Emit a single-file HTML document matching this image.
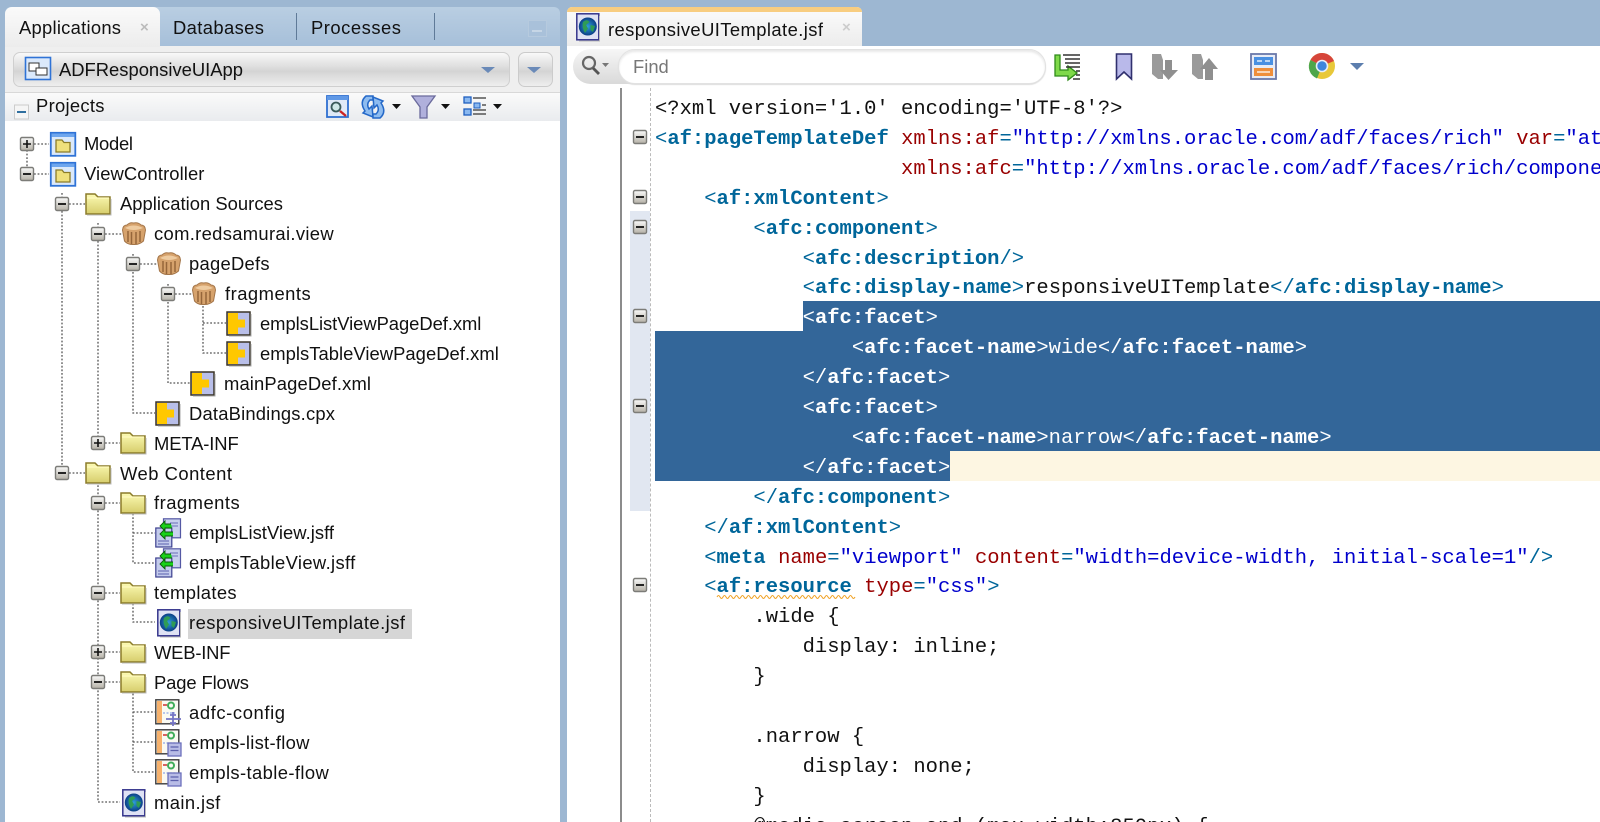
<!DOCTYPE html>
<html><head><meta charset="utf-8"><title>responsiveUITemplate.jsf</title>
<style>
html,body{margin:0;padding:0;width:1600px;height:822px;overflow:hidden;background:#9db7d2}
#root{position:absolute;left:0;top:0;width:1600px;height:822px;overflow:hidden;filter:blur(.35px)}
.a{position:absolute}
#code{position:absolute;left:0;top:4px}
#code div{position:absolute;left:655px;height:30px;line-height:30px;white-space:pre;font:20.5px/30px "Liberation Mono",monospace;color:#111}
#code b{color:#00669a;font-weight:bold}
#code i{font-style:normal;color:#00669a}
#code u{text-decoration:none;color:#990000}
#code em{font-style:normal;color:#0000cc}
#code .s,#code .s b,#code .s i{color:#fff}
.tt{font:18.4px "Liberation Sans",sans-serif;fill:#111}
</style></head><body><div id="root">
<!-- left panel -->
<div class="a" style="left:5px;top:7px;width:555px;height:39px;background:linear-gradient(#b9cee2,#a6bfd9);border-radius:6px 6px 0 0"></div>
<div class="a" style="left:5px;top:46px;width:555px;height:46px;background:#efefef"></div>
<div class="a" style="left:5px;top:7px;width:155px;height:40px;background:linear-gradient(#fafafa,#ececec);border-radius:7px 7px 0 0"></div>
<div class="a" style="left:296px;top:13px;width:1px;height:27px;background:#5f7a98"></div>
<div class="a" style="left:434px;top:13px;width:1px;height:27px;background:#5f7a98"></div>
<div class="a" style="left:528px;top:20px;width:17px;height:15px;border:1px solid #b6cade;background:#a9c1da"></div>
<div class="a" style="left:532px;top:30px;width:10px;height:2px;background:#c6d6e6"></div>
<div class="a" style="left:13px;top:52px;width:495px;height:33px;border:1px solid #cfcfcf;border-radius:7px;background:linear-gradient(#f9f9f9,#dedede 42%,#d4d4d4 55%,#eeeeee)"></div>
<div class="a" style="left:518px;top:52px;width:33px;height:33px;border:1px solid #cbcbcb;border-radius:7px;background:linear-gradient(#f9f9f9,#dedede 42%,#d4d4d4 55%,#eeeeee)"></div>
<div class="a" style="left:5px;top:92px;width:555px;height:28px;background:linear-gradient(#fafafa,#e9ebee);border-top:1px solid #d8d8d8;border-bottom:1px solid #c4d0de"></div>
<div class="a" style="left:5px;top:121px;width:555px;height:701px;background:#fff"></div>
<div class="a" style="left:188px;top:609px;width:224px;height:30px;background:#d6d6d6"></div>
<!-- editor -->
<div class="a" style="left:567px;top:46px;width:1033px;height:776px;background:#fff"></div>
<div class="a" style="left:567px;top:7px;width:295px;height:39px;background:linear-gradient(#fbfbfb,#ececec);border-radius:5px 5px 0 0;overflow:hidden"><div style="height:5px;background:#f8cd80"></div></div>
<div class="a" style="left:573px;top:49px;width:60px;height:35px;border-radius:18px 0 0 18px;background:linear-gradient(#f6f6f6,#d9d9d9)"></div>
<div class="a" style="left:618px;top:49px;width:426px;height:33px;border:1px solid #e2e2e2;border-radius:17px;background:#fff;box-shadow:inset 0 2px 2px #e8e8e8,0 1px 1px #ddd"></div>
<div class="a" style="left:620px;top:88px;width:1.5px;height:734px;background:#8c8c8c"></div>
<div class="a" style="left:630px;top:211px;width:20px;height:300px;background:#e1e7f1"></div>
<div class="a" style="left:650px;top:88px;width:0;height:734px;border-left:1px dashed #bbb"></div>
<!-- selection -->
<div class="a" style="left:803px;top:301px;width:797px;height:30px;background:#336699"></div>
<div class="a" style="left:655px;top:331px;width:945px;height:120px;background:#336699"></div>
<div class="a" style="left:655px;top:451px;width:295px;height:30px;background:#336699"></div>
<div class="a" style="left:950px;top:451px;width:650px;height:30px;background:#fdf6e2"></div>

<svg class="a" style="left:0;top:0" width="1600" height="822" viewBox="0 0 1600 822">
<defs>
<linearGradient id="fg" x1="0" y1="0" x2="0" y2="1"><stop offset="0" stop-color="#fdfbb4"/><stop offset="1" stop-color="#d6cd6c"/></linearGradient>
<linearGradient id="eg" x1="0" y1="0" x2="0" y2="1"><stop offset="0" stop-color="#fafafa"/><stop offset="1" stop-color="#b5b1a6"/></linearGradient>
<radialGradient id="gb"><stop offset="0" stop-color="#2f9fd8"/><stop offset="1" stop-color="#0b3f86"/></radialGradient>
<symbol id="plus" overflow="visible"><rect x="-6.5" y="-6.5" width="13" height="13" rx="1.5" fill="url(#eg)" stroke="#7c7c78" stroke-width="1.4"/><path d="M-4 0H4M0-4V4" stroke="#111" stroke-width="1.6"/></symbol>
<symbol id="minus" overflow="visible"><rect x="-6.5" y="-6.5" width="13" height="13" rx="1.5" fill="url(#eg)" stroke="#7c7c78" stroke-width="1.4"/><path d="M-4 0H4" stroke="#111" stroke-width="1.8"/></symbol>
<symbol id="folder" overflow="visible"><path d="M1 2H10L13 5H25V22H1Z" fill="url(#fg)" stroke="#8b7c2a" stroke-width="1.5"/><path d="M2 6H24" stroke="#fffbc0" stroke-width="1.2"/><path d="M2 23H26V7" fill="none" stroke="#bbb" stroke-width="1"/></symbol>
<symbol id="proj" overflow="visible"><rect x=".8" y=".8" width="24.5" height="23" fill="#dbe9fb" stroke="#2f73d6" stroke-width="1.8"/><rect x="1.5" y="1.5" width="23" height="3.5" fill="#6ea6ee"/><path d="M6 8H12L14 10.500H20V20H6Z" fill="#efe07c" stroke="#8b7c2a" stroke-width="1.3"/></symbol>
<symbol id="pkg" overflow="visible"><path d="M.5 8Q1 3 5 3Q8 0 11.500 1Q16 0 19 3Q23 3 23.500 8L21.500 19Q17 23 11.500 22.500Q6 23 2.500 19Z" fill="#d6a26c" stroke="#a4764a" stroke-width="1"/><path d="M3 6Q11.500 1 21 6Q11.500 10 3 6Z" fill="#eecba0"/><path d="M6 9V20M9.500 10V22M14 10V22M18 9V20" stroke="#96663a" stroke-width="1.500"/></symbol>
<symbol id="xml" overflow="visible"><rect x="1" y="1" width="23" height="23" fill="#b9bfe9" stroke="#3a3426" stroke-width="1.500"/><path d="M2 2H12V8.500H19V16.500H12V23H2Z" fill="#ffc800"/><path d="M25 3V25H3" fill="none" stroke="#aaa"/></symbol>
<symbol id="globe" overflow="visible"><rect x=".8" y=".8" width="22" height="26" fill="#dfe2f4" stroke="#34348c" stroke-width="1.500"/><circle cx="11.800" cy="13.500" r="9" fill="url(#gb)"/><path d="M7 9Q11 5.500 13.500 9L10 12L12 15.500L9 20Q5.500 14 7 9ZM14.500 12L19 13L17 19L14.500 17Z" fill="#2f9c55"/><path d="M23.500 3V28H3" fill="none" stroke="#bbb"/></symbol>
<symbol id="jsff" overflow="visible"><rect x="8.500" y=".8" width="17" height="19" fill="#c9d0ee" stroke="#5458a4" stroke-width="1.200"/><path d="M15 5H23M15 8H23" stroke="#6a70b8"/><rect x=".8" y="10" width="16" height="19" fill="#c4cbec" stroke="#3d418f" stroke-width="1.200"/><path d="M3 23H14M3 26H14" stroke="#5a60ae"/><path d="M16 6H10V3L5 8L10 13V10H17M18 14H10V11L5 16L10 21V18H18" fill="#19d219" stroke="#0a5a0a" stroke-width=".9"/></symbol>
<symbol id="flow" overflow="visible"><rect x=".8" y=".8" width="23" height="24" fill="#fafaf2" stroke="#3c3c3c" stroke-width="1.400"/><rect x="2" y="2" width="5" height="22" fill="#f6b26e"/><circle cx="16" cy="6.500" r="3" fill="none" stroke="#3fae5a" stroke-width="2"/><path d="M8 6H12" stroke="#c33" stroke-width="1.500"/><path d="M8 14H20" stroke="#8fa8e8" stroke-dasharray="2 1.500" stroke-width="1.300"/></symbol>
<symbol id="cross" overflow="visible"><path d="M18 13V27M11 20H26M15 16H21M15 24H21" stroke="#7474c4" stroke-width="1.800" fill="none"/></symbol>
<symbol id="page" overflow="visible"><rect x="13" y="14" width="13" height="13" fill="#b8bce6" stroke="#6c70bc" stroke-width="1.300"/><path d="M15.500 18H23.500M15.500 21.500H23.500" stroke="#5c60ac" stroke-width="1.300"/></symbol>
</defs>

<!-- tab texts -->
<text class="tt" x="19" y="34" textLength="102">Applications</text>
<text x="140" y="32" style="font:15px 'Liberation Sans',sans-serif;fill:#bbb;font-weight:bold">×</text>
<text class="tt" x="173" y="34" textLength="91">Databases</text>
<text class="tt" x="311" y="34" textLength="90">Processes</text>
<text class="tt" x="59" y="76" textLength="184">ADFResponsiveUIApp</text>
<text class="tt" x="36" y="112" textLength="68.500">Projects</text>
<text class="tt" x="608" y="36" textLength="215">responsiveUITemplate.jsf</text>
<text x="842" y="32" style="font:15px 'Liberation Sans',sans-serif;fill:#ccc;font-weight:bold">×</text>
<text x="633" y="73" style="font:18.400px 'Liberation Sans',sans-serif;fill:#777">Find</text>

<!-- app dropdown icon + arrows -->
<rect x="25.500" y="57.500" width="25" height="22" fill="#dbe9fb" stroke="#2f73d6" stroke-width="1.600"/>
<rect x="29" y="63" width="10" height="8" fill="#fff" stroke="#333"/><rect x="36" y="68" width="11" height="7" fill="#fff" stroke="#333"/>
<path d="M481 67H495L488 73Z" fill="#6a8ab8"/><path d="M527 67H541L534 73Z" fill="#6a8ab8"/>
<rect x="14.500" y="105" width="14" height="14" fill="#f5f5f5" stroke="#ccc"/><path d="M17 112H26" stroke="#2f6f9f" stroke-width="2"/>

<!-- projects toolbar -->
<rect x="327" y="96" width="21" height="21" fill="#dfe9f7" stroke="#2f6fd0" stroke-width="1.800"/><rect x="327" y="96" width="21" height="4" fill="#5f98e6"/>
<circle cx="336" cy="107" r="4.500" fill="#cfe8e8" stroke="#3a5a5a" stroke-width="1.800"/><path d="M340 111L346 116" stroke="#c22" stroke-width="2.400"/>
<path d="M366 96H373V100H370Q366 104 369 109L372 106L373 117L363 113L365 111Q359 102 366 96Z" fill="#8ebcf0" stroke="#2468c8" stroke-width="1.500"/>
<path d="M380 118H373V114H376Q380 110 377 105L374 108L373 97L383 101L381 103Q387 112 380 118Z" fill="#8ebcf0" stroke="#2468c8" stroke-width="1.500"/>
<path d="M392 104H401L396.500 109Z" fill="#111"/>
<path d="M412 96H435L427 107V118H420V107Z" fill="#b0b0dc" stroke="#6a6a9c" stroke-width="1.300"/>
<path d="M441 104H450L445.500 109Z" fill="#111"/>
<rect x="464" y="97" width="7" height="6" fill="#8ab8f0" stroke="#1f5fc0" stroke-width="1.300"/><rect x="464" y="109" width="7" height="6" fill="#8ab8f0" stroke="#1f5fc0" stroke-width="1.300"/><rect x="474" y="103" width="6" height="5" fill="#8ab8f0" stroke="#1f5fc0"/>
<path d="M473 98H486M482 105H486M473 110H486M473 114H486" stroke="#555" stroke-width="1.400"/>
<path d="M493 104H502L497.500 109Z" fill="#111"/>

<!-- connectors -->
<path d="M27 150V168M62 193V467M98 223V437M98 478V802H120M133 254V413H155M168 284V383H190M203 306V353H226M203 323H226M133 510V563H155M133 533H155M133 600V622H155M133 690V772H155M133 712H155M133 742H155
M34 144H49M34 174H49M69 204H85M105 234H122M140 264H157M175 294H192M69 473H85M105 443H120M105 503H120M105 593H120M105 652H120M105 682H120" fill="none" stroke="#555" stroke-width="1.300" stroke-dasharray="1.800 1.800"/>

<!-- expanders -->
<use href="#plus" x="27" y="144"/><use href="#minus" x="27" y="174"/><use href="#minus" x="62" y="204"/>
<use href="#minus" x="98" y="234"/><use href="#minus" x="133" y="264"/><use href="#minus" x="168" y="294"/>
<use href="#plus" x="98" y="443"/><use href="#minus" x="62" y="473"/><use href="#minus" x="98" y="503"/>
<use href="#minus" x="98" y="593"/><use href="#plus" x="98" y="652"/><use href="#minus" x="98" y="682"/>

<!-- tree icons -->
<use href="#proj" x="50" y="132"/><use href="#proj" x="50" y="162"/>
<use href="#folder" x="85" y="192"/><use href="#pkg" x="122" y="222"/><use href="#pkg" x="157" y="252"/><use href="#pkg" x="192" y="282"/>
<use href="#xml" x="226" y="311"/><use href="#xml" x="226" y="341"/><use href="#xml" x="190" y="371"/><use href="#xml" x="155" y="401"/>
<use href="#folder" x="120" y="431"/><use href="#folder" x="85" y="461"/><use href="#folder" x="120" y="491"/>
<use href="#jsff" x="155" y="518"/><use href="#jsff" x="155" y="548"/>
<use href="#folder" x="120" y="581"/><use href="#globe" x="157" y="609"/>
<use href="#folder" x="120" y="640"/><use href="#folder" x="120" y="670"/>
<use href="#flow" x="155" y="699"/><use href="#cross" x="155" y="699"/>
<use href="#flow" x="155" y="729"/><use href="#page" x="155" y="729"/>
<use href="#flow" x="155" y="759"/><use href="#page" x="155" y="759"/>
<use href="#globe" x="122" y="789"/>
<use href="#globe" x="576" y="13"/>

<!-- tree text -->
<text class="tt" x="84" y="150" textLength="49">Model</text>
<text class="tt" x="84" y="180" textLength="120.400">ViewController</text>
<text class="tt" x="120" y="210" textLength="163">Application Sources</text>
<text class="tt" x="154" y="240" textLength="179.600">com.redsamurai.view</text>
<text class="tt" x="189" y="270" textLength="80.600">pageDefs</text>
<text class="tt" x="225" y="300" textLength="85.700">fragments</text>
<text class="tt" x="260" y="330" textLength="221.400">emplsListViewPageDef.xml</text>
<text class="tt" x="260" y="360" textLength="238.800">emplsTableViewPageDef.xml</text>
<text class="tt" x="224" y="390" textLength="147">mainPageDef.xml</text>
<text class="tt" x="189" y="420" textLength="146">DataBindings.cpx</text>
<text class="tt" x="154" y="450" textLength="84.700">META-INF</text>
<text class="tt" x="120" y="480" textLength="112">Web Content</text>
<text class="tt" x="154" y="509" textLength="85.700">fragments</text>
<text class="tt" x="189" y="539" textLength="145">emplsListView.jsff</text>
<text class="tt" x="189" y="569" textLength="166.300">emplsTableView.jsff</text>
<text class="tt" x="154" y="599" textLength="82.600">templates</text>
<text class="tt" x="189" y="629" textLength="216">responsiveUITemplate.jsf</text>
<text class="tt" x="154" y="659" textLength="76.500">WEB-INF</text>
<text class="tt" x="154" y="689" textLength="95">Page Flows</text>
<text class="tt" x="189" y="719" textLength="96">adfc-config</text>
<text class="tt" x="189" y="749" textLength="120.400">empls-list-flow</text>
<text class="tt" x="189" y="779" textLength="139.800">empls-table-flow</text>
<text class="tt" x="154" y="809" textLength="66.300">main.jsf</text>

<!-- find magnifier -->
<circle cx="589" cy="63" r="6" fill="none" stroke="#666" stroke-width="2.200"/><path d="M593 68L599 74" stroke="#555" stroke-width="2.800"/><path d="M602 63H609L605.500 67Z" fill="#777"/>

<!-- editor toolbar -->
<path d="M1055 55H1060V70H1068V66L1077 73L1068 80V76H1055Z" fill="#7fd94a" stroke="#2f8a1a" stroke-width="1.300"/>
<path d="M1063 55H1080M1065 59H1080M1065 63H1080M1066 67H1080M1076 71H1080M1076 75H1080M1073 79H1080" stroke="#333" stroke-width="1.500"/>
<path d="M1116.500 54H1131.500V79L1124 72L1116.500 79Z" fill="#b9b9ea" stroke="#30306e" stroke-width="1.600"/>
<path d="M1152 54H1161L1163 60V79H1158L1152 74Z" fill="#9a9a9a"/><path d="M1165 60H1172V70H1178L1168.500 80L1160 70H1165Z" fill="#8f8f8f"/>
<path d="M1192 54H1201L1203 60V79H1198L1192 74Z" fill="#9a9a9a"/><path d="M1205 80V69H1200L1209 58L1218 69H1213V80Z" fill="#8f8f8f"/>
<rect x="1251" y="54" width="25" height="25" fill="#e8ecf6" stroke="#6a78aa" stroke-width="1.800"/><rect x="1254" y="57" width="19" height="8" fill="#4a90e2"/><rect x="1254" y="68" width="19" height="8" fill="#ef8f3c"/><path d="M1257 61H1262M1265 61H1270M1257 72H1270" stroke="#fff" stroke-width="1.200"/>
<circle cx="1322" cy="66" r="13" fill="#e8c83a"/><path d="M1322 66L1310.500 60A13 13 0 0 1 1334 61Z" fill="#d6453a"/><path d="M1322 66L1310.500 60A13 13 0 0 0 1317 78.500Z" fill="#4ea64a"/><circle cx="1322" cy="66" r="5.500" fill="#3d86dc" stroke="#e8eef8" stroke-width="1.600"/>
<path d="M1350 63H1364L1357 70Z" fill="#5c7eae"/>

<!-- fold markers -->
<use href="#minus" x="640" y="137"/><use href="#minus" x="640" y="197"/><use href="#minus" x="640" y="227"/><use href="#minus" x="640" y="316"/><use href="#minus" x="640" y="406"/><use href="#minus" x="640" y="585"/>
<path d="M717 597q1.500-3 3 0t3 0t3 0t3 0t3 0t3 0t3 0t3 0t3 0t3 0t3 0t3 0t3 0t3 0t3 0t3 0t3 0t3 0t3 0t3 0t3 0t3 0t3 0t3 0t3 0t3 0t3 0t3 0t3 0t3 0t3 0t3 0t3 0t3 0t3 0t3 0t3 0t3 0t3 0t3 0t3 0t3 0t3 0t3 0t3 0t3 0" fill="none" stroke="#f0a020" stroke-width="1"/>
</svg>

<div id="code">
<div style="top:91px">&lt;?xml version='1.0' encoding='UTF-8'?&gt;</div>
<div style="top:120.900px"><i>&lt;</i><b>af:pageTemplateDef</b> <u>xmlns:af</u><i>=</i><em>"http://xmlns.oracle.com/adf/faces/rich"</em> <u>var</u><i>=</i><em>"attrs"</em></div>
<div style="top:150.800px">                    <u>xmlns:afc</u><i>=</i><em>"http://xmlns.oracle.com/adf/faces/rich/component"</em></div>
<div style="top:180.700px">    <i>&lt;</i><b>af:xmlContent</b><i>&gt;</i></div>
<div style="top:210.600px">        <i>&lt;</i><b>afc:component</b><i>&gt;</i></div>
<div style="top:240.500px">            <i>&lt;</i><b>afc:description</b><i>/&gt;</i></div>
<div style="top:270.400px">            <i>&lt;</i><b>afc:display-name</b><i>&gt;</i>responsiveUITemplate<i>&lt;/</i><b>afc:display-name</b><i>&gt;</i></div>
<div class="s" style="top:300.300px">            &lt;<b>afc:facet</b>&gt;</div>
<div class="s" style="top:330.200px">                &lt;<b>afc:facet-name</b>&gt;wide&lt;/<b>afc:facet-name</b>&gt;</div>
<div class="s" style="top:360.100px">            &lt;/<b>afc:facet</b>&gt;</div>
<div class="s" style="top:390px">            &lt;<b>afc:facet</b>&gt;</div>
<div class="s" style="top:419.900px">                &lt;<b>afc:facet-name</b>&gt;narrow&lt;/<b>afc:facet-name</b>&gt;</div>
<div class="s" style="top:449.800px">            &lt;/<b>afc:facet</b>&gt;</div>
<div style="top:479.700px">        <i>&lt;/</i><b>afc:component</b><i>&gt;</i></div>
<div style="top:509.600px">    <i>&lt;/</i><b>af:xmlContent</b><i>&gt;</i></div>
<div style="top:539.500px">    <i>&lt;</i><b>meta</b> <u>name</u><i>=</i><em>"viewport"</em> <u>content</u><i>=</i><em>"width=device-width, initial-scale=1"</em><i>/&gt;</i></div>
<div style="top:569.400px">    <i>&lt;</i><b>af:resource</b> <u>type</u><i>=</i><em>"css"</em><i>&gt;</i></div>
<div style="top:599.300px">        .wide {</div>
<div style="top:629.200px">            display: inline;</div>
<div style="top:659.100px">        }</div>
<div style="top:718.900px">        .narrow {</div>
<div style="top:748.800px">            display: none;</div>
<div style="top:778.700px">        }</div>
<div style="top:808.600px">        @media screen and (max-width:850px) {</div>
</div>
</div></body></html>
